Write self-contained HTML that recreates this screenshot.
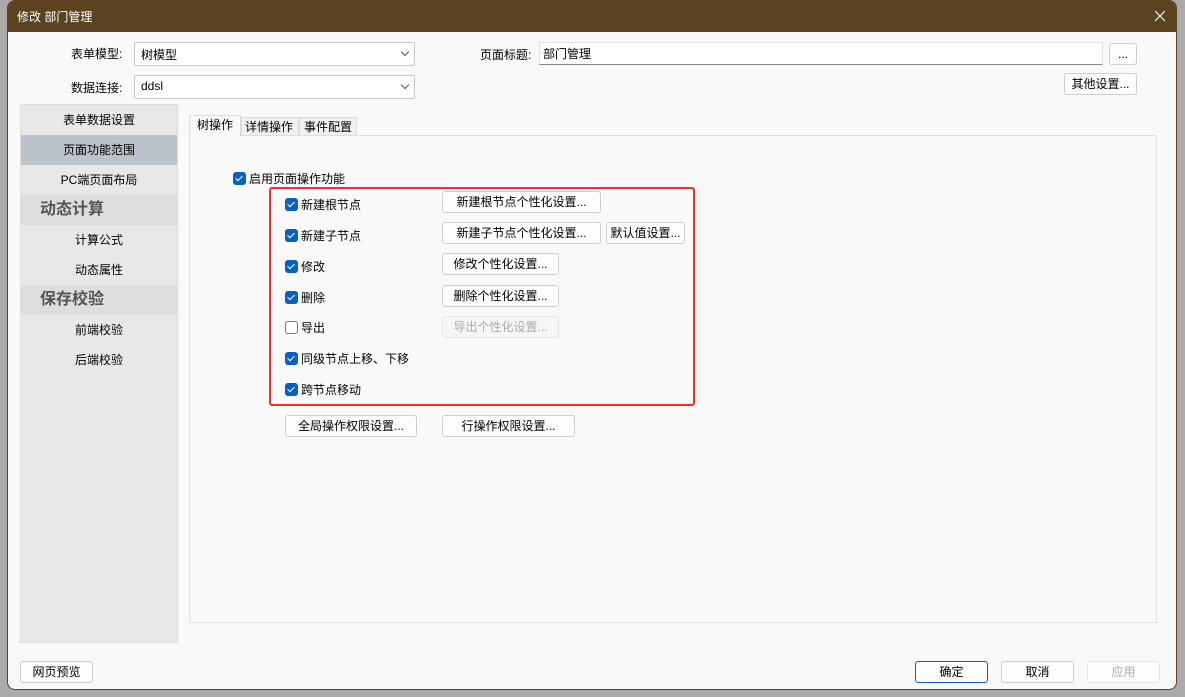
<!DOCTYPE html>
<html><head><meta charset="utf-8"><style>
*{box-sizing:border-box;margin:0;padding:0}
body{width:1185px;height:697px;background:#ababab;font-family:"Liberation Sans","Noto Sans CJK SC",sans-serif;font-size:12px;color:#000;position:relative;overflow:hidden;white-space:nowrap}
.win{position:absolute;left:7px;top:0;width:1170px;height:690px;background:#f9f9f9;border-radius:8px;overflow:hidden;border:1px solid #5b4220}
.title{height:31px;background:#5b4220;color:#fff;font-size:12px;padding:7px 0 0 9px}
.a{position:absolute}
.btn{position:absolute;border:1px solid #cfcfcf;border-radius:3px;background:#fdfdfd;text-align:center;height:22px;line-height:20px;font-size:12px}
.cb{position:absolute;width:13px;height:13px;border-radius:3px;background:#0a5fc2}
.cb::after{content:"";position:absolute;left:4px;top:2px;width:3px;height:6px;border:solid #fff;border-width:0 1.5px 1.5px 0;transform:rotate(45deg)}
.cb.off{background:#fff;border:1px solid #777}
.cb.off::after{display:none}
.sel{position:absolute;border:1px solid #c8c8c8;background:#fff;height:24px;border-radius:2px;padding:3px 6px}
.sel::after{content:"";position:absolute;right:6px;top:6px;width:5px;height:5px;border:solid #555;border-width:0 1px 1px 0;transform:rotate(45deg)}
.nav div{height:30px;line-height:30px;text-align:center;font-size:12px}
.l{position:absolute;line-height:14px}
</style></head><body>
<div class="win">
<div class="title">修改 部门管理</div>
<svg class="a" style="right:10px;top:9px" width="12" height="12" viewBox="0 0 12 12"><path d="M1 1L11 11M11 1L1 11" stroke="#fff" stroke-width="1.2"/></svg>
</div>
<div class="a" style="left:71px;top:45px">表单模型:</div>
<div class="sel" style="left:134px;top:42px;width:281px">树模型</div>
<div class="a" style="left:71px;top:79px">数据连接:</div>
<div class="sel" style="left:134px;top:75px;width:281px">ddsl</div>
<div class="a" style="left:480px;top:46px">页面标题:</div>
<div class="a" style="left:539px;top:42px;width:564px;height:23px;background:#fff;border:1px solid #e0e0e0;border-bottom:1px solid #888;padding:2px 3px">部门管理</div>
<div class="btn" style="left:1109px;top:43px;width:28px">...</div>
<div class="btn" style="left:1064px;top:73px;width:73px">其他设置...</div>
<div class="a nav" style="left:20px;top:104px;width:158px;height:539px;background:#e8e8e8;border:1px solid #ddd">
<div>表单数据设置</div>
<div style="background:#bcc2c9">页面功能范围</div>
<div>PC端页面布局</div>
<div style="text-align:left;padding-left:19px;font-size:16px;color:#555;font-weight:bold;background:#dedede">动态计算</div>
<div>计算公式</div>
<div>动态属性</div>
<div style="text-align:left;padding-left:19px;font-size:16px;color:#555;font-weight:bold;background:#dedede">保存校验</div>
<div>前端校验</div>
<div>后端校验</div>
</div>
<div class="a" style="left:189px;top:135px;width:968px;height:488px;background:#f9f9f9;border:1px solid #e0e0e0"></div>
<div class="a" style="left:189px;top:115px;width:52px;height:21px;border:1px solid #ddd;border-bottom:none;background:#f9f9f9;padding:2px 0 0 7px;line-height:14px">树操作</div>
<div class="a" style="left:241px;top:117px;width:58px;height:19px;border:1px solid #ddd;background:#f0f0f0;padding:2px 3px;line-height:14px">详情操作</div>
<div class="a" style="left:299px;top:117px;width:58px;height:19px;border:1px solid #ddd;background:#f0f0f0;padding:2px 4px;line-height:14px">事件配置</div>
<div class="cb" style="left:233px;top:172px"></div><div class="l" style="left:249px;top:172px">启用页面操作功能</div>
<div class="a" style="left:269px;top:187px;width:426px;height:219px;border:2px solid #e8342c;border-radius:3px"></div>
<div class="cb" style="left:285px;top:198px"></div><div class="l" style="left:301px;top:198px">新建根节点</div>
<div class="cb" style="left:285px;top:229px"></div><div class="l" style="left:301px;top:229px">新建子节点</div>
<div class="cb" style="left:285px;top:260px"></div><div class="l" style="left:301px;top:260px">修改</div>
<div class="cb" style="left:285px;top:291px"></div><div class="l" style="left:301px;top:291px">删除</div>
<div class="cb off" style="left:285px;top:321px"></div><div class="l" style="left:301px;top:321px">导出</div>
<div class="cb" style="left:285px;top:352px"></div><div class="l" style="left:301px;top:352px">同级节点上移、下移</div>
<div class="cb" style="left:285px;top:383px"></div><div class="l" style="left:301px;top:383px">跨节点移动</div>
<div class="btn" style="left:442px;top:191px;width:159px">新建根节点个性化设置...</div>
<div class="btn" style="left:442px;top:222px;width:159px">新建子节点个性化设置...</div>
<div class="btn" style="left:606px;top:222px;width:79px">默认值设置...</div>
<div class="btn" style="left:442px;top:253px;width:117px">修改个性化设置...</div>
<div class="btn" style="left:442px;top:285px;width:117px">删除个性化设置...</div>
<div class="btn" style="left:442px;top:316px;width:117px;color:#aaa;border-color:#e4e4e4;background:#f6f6f6">导出个性化设置...</div>
<div class="btn" style="left:285px;top:415px;width:132px">全局操作权限设置...</div>
<div class="btn" style="left:442px;top:415px;width:133px">行操作权限设置...</div>
<div class="btn" style="left:20px;top:661px;width:73px">网页预览</div>
<div class="btn" style="left:915px;top:661px;width:73px;border-color:#0a5fc2">确定</div>
<div class="btn" style="left:1001px;top:661px;width:73px">取消</div>
<div class="btn" style="left:1087px;top:661px;width:73px;color:#aaa;border-color:#e4e4e4">应用</div>
</body></html>
